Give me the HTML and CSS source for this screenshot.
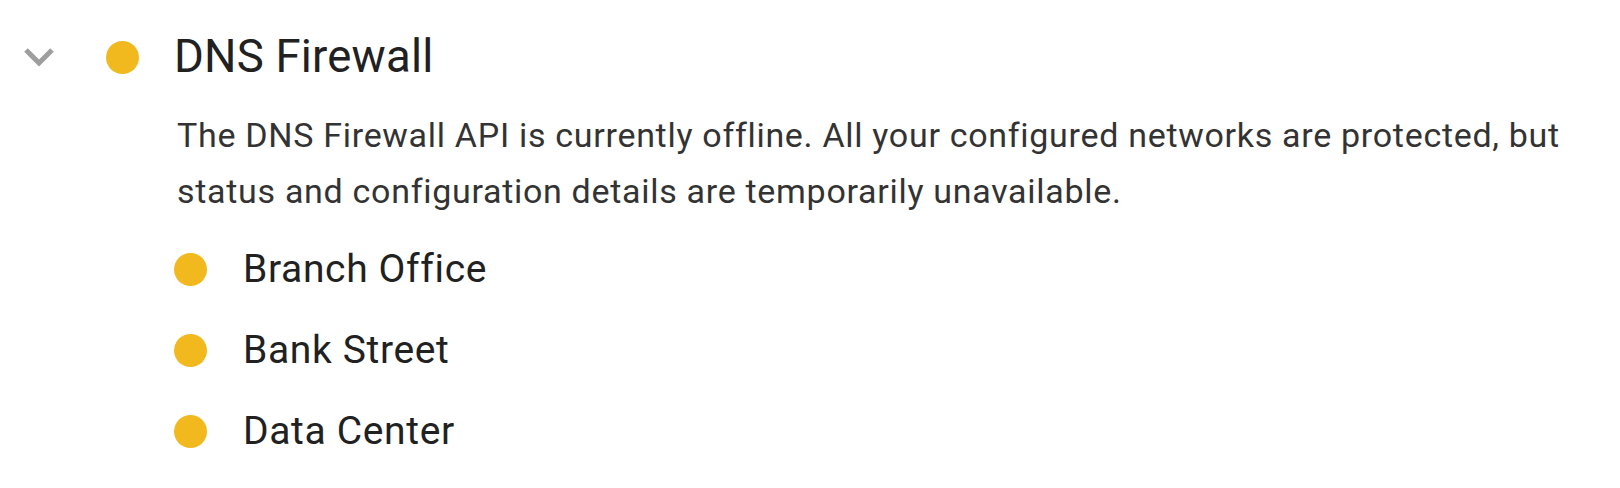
FILE: index.html
```html
<!DOCTYPE html>
<html lang="en">
<head>
<meta charset="utf-8">
<title>DNS Firewall</title>
<link rel="stylesheet" href="styles.css">
</head>
<body>
<section class="panel">
  <div class="header">
    <svg class="chevron" width="30" height="20" viewBox="0 0 30 20" aria-hidden="true">
      <polyline points="2,3 15,16 28,3" fill="none" stroke="#9e9e9e" stroke-width="5"/>
    </svg>
    <span class="dot dot-head"></span>
    <h2 class="title">DNS Firewall</h2>
  </div>
  <div class="content">
    <p class="desc">The DNS Firewall API is currently offline. All your configured networks are protected, but status and configuration details are temporarily unavailable.</p>
    <ul class="networks">
      <li class="network"><span class="dot"></span><span class="name">Branch Office</span></li>
      <li class="network"><span class="dot"></span><span class="name">Bank Street</span></li>
      <li class="network"><span class="dot"></span><span class="name">Data Center</span></li>
    </ul>
  </div>
</section>
</body>
</html>
```

FILE: styles.css
```css
html, body {
  margin: 0;
  padding: 0;
  background: #ffffff;
}

body {
  font-family: Roboto, "Liberation Sans", Arial, sans-serif;
  color: #212121;
}

.panel {
  padding-top: 27px;
}

.header {
  display: flex;
  align-items: center;
  height: 60px;
  padding-left: 24px;
}

.chevron {
  display: block;
  flex: none;
  margin-right: 52px;
}

.dot {
  display: block;
  flex: none;
  width: 33px;
  height: 33px;
  border-radius: 50%;
  background: #f2b91f;
}

.dot-head {
  margin-right: 35px;
}

.title {
  margin: 0;
  font-size: 45.5px;
  font-weight: 400;
  letter-spacing: 0.2px;
  line-height: 60px;
  color: #212121;
}

.content {
  margin-left: 174px;
}

.desc {
  margin: 20px 0 0 0;
  padding-left: 3px;
  font-size: 34px;
  letter-spacing: 0.7px;
  line-height: 56px;
  color: #333333;
}

.networks {
  list-style: none;
  margin: 10px 0 0 0;
  padding: 0;
}

.network {
  display: flex;
  align-items: center;
  height: 81px;
}

.network .dot {
  margin-right: 36px;
}

.name {
  font-size: 39px;
  letter-spacing: 0.65px;
  line-height: 81px;
  color: #212121;
}
```
